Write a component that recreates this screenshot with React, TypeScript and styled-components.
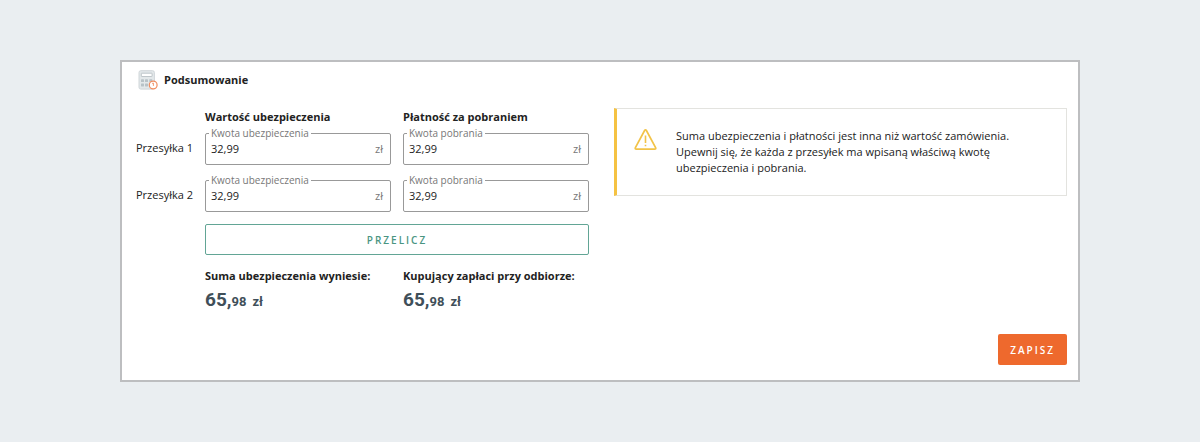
import React, { useState } from "react";
import styled, { createGlobalStyle } from "styled-components";

const GlobalStyle = createGlobalStyle`
  * { box-sizing: border-box; }
  body {
    margin: 0;
    background: #eaeef1;
    color: #222;
    font: 11px/16px "Open Sans", "Noto Sans", sans-serif;
  }
  h1, h2, p, dl, dd { margin: 0; font-size: inherit; }
  button, input { font: inherit; color: inherit; }
`;

const Page = styled.main`
  padding: 60px 10%;
`;

const Panel = styled.section`
  padding: 8px 11px 15px 14px;
  border: 2px solid #bdbec0;
  background: #fff;
`;

const PanelHeader = styled.header`
  display: flex;
  align-items: center;
  gap: 6px;
  height: 20px;
  padding-left: 2px;
`;

const Columns = styled.div`
  display: grid;
  grid-template-columns: repeat(auto-fit, minmax(360px, 1fr));
  align-items: start;
  gap: 25px;
  margin-top: 18px;
`;

const FormGrid = styled.div`
  display: grid;
  grid-template-columns: 57px 1fr 1fr;
  column-gap: 12px;
`;

const ColumnTitle = styled.h2<{ $column: number }>`
  grid-column: ${(p) => p.$column};
  padding: 1px 0 8px;
`;

const RowLabel = styled.span`
  padding-top: 7px;
  white-space: nowrap;
`;

const Field = styled.div`
  position: relative;
  display: flex;
  align-items: center;
  height: 32px;
  margin-bottom: 15px;
  padding: 0 7px 0 5px;
  border: 1px solid #999;
  border-radius: 2px;
`;

const FieldLabel = styled.label`
  position: absolute;
  top: -8px;
  left: 3px;
  padding: 0 2px;
  background: #fff;
  color: #777;
  font-size: 10px;
  line-height: 14px;
`;

const FieldInput = styled.input`
  flex: 1;
  min-width: 0;
  padding: 0;
  border: 0;
  outline: 0;
  background: none;
`;

const Currency = styled.span`
  color: #777;
`;

const Button = styled.button`
  height: 31px;
  padding: 0 12px;
  border-radius: 2px;
  font-size: 10px;
  font-weight: 600;
  letter-spacing: 2px;
`;

const RecalculateButton = styled(Button)`
  grid-column: 2 / -1;
  margin: -3px 0 13px;
  border: 1px solid #62a595;
  background: #fff;
  color: #4a9582;
`;

const SaveButton = styled(Button)`
  border: 0;
  background: #ee692d;
  color: #fff;
`;

const Total = styled.dl<{ $column: number }>`
  grid-column: ${(p) => p.$column};
  white-space: nowrap;
`;

const TotalName = styled.dt`
  font-weight: 700;
`;

const TotalValue = styled.dd`
  margin-top: 4px;
  color: #3f4f59;
  font: 700 13px/24px Roboto, sans-serif;
`;

const Whole = styled.span`
  font-size: 19px;
`;

const Unit = styled.span`
  margin-left: 6px;
`;

const Notice = styled.aside`
  display: flex;
  gap: 19px;
  min-height: 88px;
  padding: 19px 20px 18px 17px;
  border: 1px solid #e3e3df;
  border-left: 3px solid #f5c242;
`;

const NoticeText = styled.p`
  flex: 1;
  max-width: 340px;
`;

const Actions = styled.footer`
  display: flex;
  justify-content: flex-end;
  margin-top: 20px;
`;

function CalculatorIcon() {
  return (
    <svg width="20" height="20" viewBox="0 0 20 20" fill="none" aria-hidden="true">
      <rect x="1" y="0.7" width="15.4" height="18.4" rx="1.8" fill="#e3e8ea" stroke="#d0d6d9" />
      <rect x="3.3" y="3.2" width="10.8" height="3.3" rx="0.4" fill="#fff" stroke="#b9c1c5" strokeWidth="0.9" />
      <g fill="#b8c2c7">
        <rect x="3" y="9.3" width="3" height="2.8" rx="0.4" />
        <rect x="7" y="9.3" width="3" height="2.8" rx="0.4" />
        <rect x="11.3" y="9.3" width="3" height="2.8" rx="0.4" />
        <rect x="3" y="13.6" width="3" height="2.8" rx="0.4" />
        <rect x="7" y="13.6" width="3" height="2.8" rx="0.4" />
      </g>
      <circle cx="15.2" cy="15" r="3.9" fill="#fff" stroke="#f08d5f" strokeWidth="1.2" />
      <path d="M14.1 13.4l1.3-.3v2.8" stroke="#f08d5f" strokeWidth="0.9" />
    </svg>
  );
}

function WarningIcon() {
  return (
    <svg width="23" height="24" viewBox="0 0 23 24" fill="none" stroke="#f2c348" strokeLinejoin="round" aria-hidden="true">
      <path d="M10.6 2.5q.9-1.5 1.8 0l9.2 17.1q.7 1.6-1 1.6H2.4q-1.7 0-1-1.6z" strokeWidth="1.7" />
      <path d="M11.5 7.5v7.5M11.5 16.7v1.6" strokeWidth="1.6" />
    </svg>
  );
}

type AmountFieldProps = {
  id: string;
  label: string;
  value: string;
  onChange: (value: string) => void;
};

function AmountField({ id, label, value, onChange }: AmountFieldProps) {
  return (
    <Field>
      <FieldLabel htmlFor={id}>{label}</FieldLabel>
      <FieldInput id={id} inputMode="decimal" value={value} onChange={(e) => onChange(e.target.value)} />
      <Currency>zł</Currency>
    </Field>
  );
}

const toNumber = (text: string) => Number(text.replace(",", ".")) || 0;

function Amount({ value }: { value: number }) {
  const [whole, cents] = value.toFixed(2).split(".");
  return (
    <TotalValue>
      <Whole>{whole},</Whole>
      {cents}
      <Unit>zł</Unit>
    </TotalValue>
  );
}

export default function App() {
  const [parcels, setParcels] = useState([
    { insurance: "32,99", cod: "32,99" },
    { insurance: "32,99", cod: "32,99" },
  ]);
  const [totals, setTotals] = useState({ insurance: 65.98, cod: 65.98 });

  const update = (index: number, key: "insurance" | "cod", value: string) =>
    setParcels(parcels.map((p, i) => (i === index ? { ...p, [key]: value } : p)));

  const recalculate = () =>
    setTotals({
      insurance: parcels.reduce((sum, p) => sum + toNumber(p.insurance), 0),
      cod: parcels.reduce((sum, p) => sum + toNumber(p.cod), 0),
    });

  return (
    <>
      <GlobalStyle />
      <Page>
        <Panel>
          <PanelHeader>
            <CalculatorIcon />
            <h1>Podsumowanie</h1>
          </PanelHeader>
          <Columns>
            <FormGrid>
              <ColumnTitle $column={2}>Wartość ubezpieczenia</ColumnTitle>
              <ColumnTitle $column={3}>Płatność za pobraniem</ColumnTitle>
              {parcels.map((parcel, i) => (
                <React.Fragment key={i}>
                  <RowLabel>Przesyłka {i + 1}</RowLabel>
                  <AmountField
                    id={`insurance-${i}`}
                    label="Kwota ubezpieczenia"
                    value={parcel.insurance}
                    onChange={(v) => update(i, "insurance", v)}
                  />
                  <AmountField
                    id={`cod-${i}`}
                    label="Kwota pobrania"
                    value={parcel.cod}
                    onChange={(v) => update(i, "cod", v)}
                  />
                </React.Fragment>
              ))}
              <RecalculateButton type="button" onClick={recalculate}>
                PRZELICZ
              </RecalculateButton>
              <Total $column={2}>
                <TotalName>Suma ubezpieczenia wyniesie:</TotalName>
                <Amount value={totals.insurance} />
              </Total>
              <Total $column={3}>
                <TotalName>Kupujący zapłaci przy odbiorze:</TotalName>
                <Amount value={totals.cod} />
              </Total>
            </FormGrid>
            <Notice>
              <WarningIcon />
              <NoticeText>
                Suma ubezpieczenia i płatności jest inna niż wartość zamówienia. Upewnij się, że każda z przesyłek ma
                wpisaną właściwą kwotę ubezpieczenia i pobrania.
              </NoticeText>
            </Notice>
          </Columns>
          <Actions>
            <SaveButton type="button">ZAPISZ</SaveButton>
          </Actions>
        </Panel>
      </Page>
    </>
  );
}
